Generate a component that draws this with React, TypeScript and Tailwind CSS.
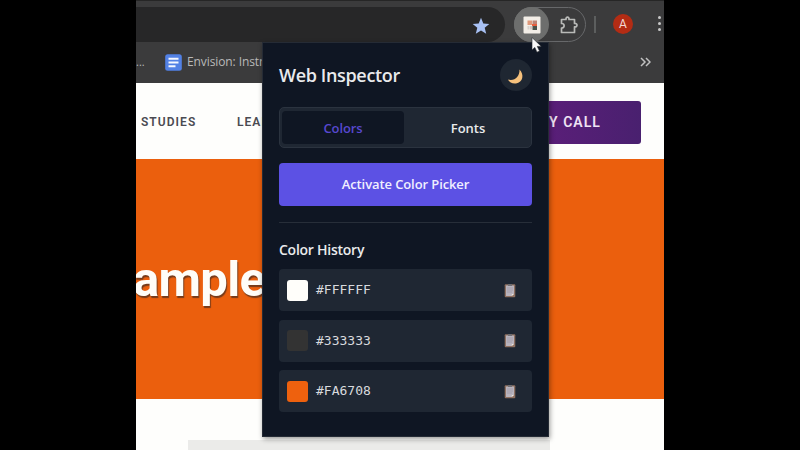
import React from "react";

function BrowserToolbar() {
  return (
    <div className="flex h-[42px] flex-none items-start bg-[#3b3b3c] border-t border-[#262626] pt-[6px]">
      <div className="flex h-[35px] w-[369px] items-center justify-end rounded-r-full bg-[#272728] pr-[15px]">
        <svg width="18" height="18" viewBox="0 0 18 18" className="mt-[2px]">
          <path d="M9 .8l2.300 5.600 6 .5-4.600 3.900 1.500 5.900L9 13.500l-5.200 3.200 1.500-5.900L.7 6.900l6-.5z" fill="#a8c1f4" />
        </svg>
      </div>
      <div className="ml-[9px] flex h-[35px] w-[72px] items-center rounded-full border border-[#67686a]">
        <div className="-ml-px flex size-[35px] flex-none items-center justify-center rounded-full bg-[#6d6e6d]">
          <svg width="18" height="18" viewBox="0 0 18 18">
            <rect x=".5" y=".5" width="17" height="17" rx="1" fill="#f3eee7" />
            <rect x="4.500" y="4.500" width="4.500" height="4.500" fill="#df997b" />
            <rect x="9.500" y="4.500" width="4.500" height="3.500" fill="#bd8475" />
            <rect x="9" y="8" width="5" height="2" fill="#e75f3d" />
            <rect x="9.500" y="10" width="4.500" height="4" fill="#49534b" />
            <rect x="4.500" y="10" width="2" height="3.500" fill="#d8d2cd" />
            <rect x="7" y="10" width="2" height="3.500" fill="#d4c7c2" />
          </svg>
        </div>
        <svg width="20" height="20" viewBox="0 0 20 20" className="ml-[10px]" fill="none" stroke="#b9bab8" strokeWidth="1.700" strokeLinejoin="round">
          <path d="M2.500 4.500H7C6.600 1.200 10.400 1.200 10 4.500H15.500V8.500C18.800 8.100 18.800 12.300 15.500 11.900V17.500H2.500V13C6 13 6 8.500 2.500 8.500Z" />
        </svg>
      </div>
      <div className="mt-[9px] ml-[8px] h-[17px] w-[2px] bg-[#5c5e5e]" />
      <div className="mt-[7px] ml-[17px] flex size-[20px] items-center justify-center rounded-full bg-[#b32c14] font-['Roboto',sans-serif] text-[12px] text-[#f3d9d4]">
        A
      </div>
      <div className="mt-[9px] ml-[25px] flex flex-col gap-[3px]">
        <i className="block size-[3px] rounded-full bg-[#c9c9c9]" />
        <i className="block size-[3px] rounded-full bg-[#c9c9c9]" />
        <i className="block size-[3px] rounded-full bg-[#c9c9c9]" />
      </div>
    </div>
  );
}

function BookmarksBar() {
  return (
    <div className="flex h-[41px] flex-none items-center bg-[#3b3b3c] font-['Open_Sans','Noto_Sans',sans-serif] text-[12px] whitespace-nowrap text-[#b9b9b9]">
      <span className="w-[29px] text-[11px]">...</span>
      <svg width="17" height="17" viewBox="0 0 17 17" className="-mt-px">
        <rect x=".2" y=".2" width="16.600" height="16.600" rx="2.500" fill="#5281e5" />
        <path d="M3.500 4.700h10M3.500 8.500h10M3.500 12.300h7" stroke="#f4f7ff" strokeWidth="2" />
      </svg>
      <span className="-mt-px ml-[5px] tracking-[-0.1px]">Envision: Instr</span>
      <svg width="11" height="10" viewBox="0 0 11 10" className="-mt-px mr-[13px] ml-auto" fill="none" stroke="#c1c1c1" strokeWidth="1.500">
        <path d="M1 1l4 4-4 4M6 1l4 4-4 4" />
      </svg>
    </div>
  );
}

function WebPage() {
  return (
    <div className="flex flex-1 flex-col bg-[#fefefc] font-['Roboto',sans-serif] whitespace-nowrap">
      <div className="flex h-[76px] flex-none items-center text-[12px] font-semibold tracking-[1.05px] text-[#4b4b52]">
        <span className="w-[101px] pt-[2px] pl-[5px]">STUDIES</span>
        <span className="pt-[2px]">LEADERSHIP</span>
        <div className="mt-[3px] ml-auto mr-[23px] flex h-[43px] w-[150px] items-center justify-end rounded-[3px] bg-linear-to-r from-[#641c7e] to-[#49206f] pr-[40px] text-[14px] font-semibold tracking-[1.05px] text-[#efe3f4]">
          MY CALL
        </div>
      </div>
      <div className="flex h-[240px] flex-none items-center overflow-hidden bg-[#eb5f0d]">
        <h1 className="-ml-[3px] text-[49px] leading-none font-bold tracking-[-0.7px] text-[#fffdf8] [text-shadow:1px_2px_1px_#753b1b]">ample</h1>
      </div>
      <div className="mt-[41px] ml-[52px] h-[10px] w-[362px] bg-[#ebebe9]" />
    </div>
  );
}

function ColorRow({ color, label }: { color: string; label: string }) {
  return (
    <div className="flex h-[42px] items-center rounded-[4px] bg-[#1f2733] pr-[16px] pl-[8px]">
      <span className="size-[21px] rounded-[3px]" style={{ backgroundColor: color }} />
      <span className="ml-[8px] font-['DejaVu_Sans_Mono',monospace] text-[13px] text-[#d8dade]">{label}</span>
      <svg width="12" height="15" viewBox="0 0 12 15" className="ml-auto">
        <rect x=".7" y="1.200" width="10.600" height="13" rx="1" fill="#8f7060" />
        <path d="M2 2.500h8v8.500L7.800 13H2z" fill="#b8b3bd" />
        <path d="M3 5h6M3 7h6M3 9h5" stroke="#9997a5" strokeWidth=".7" />
        <path d="M7.800 13v-2H10z" fill="#eee4da" />
        <rect x="4" y="1" width="4" height="2" rx=".5" fill="#706f74" />
      </svg>
    </div>
  );
}

function InspectorPopup() {
  return (
    <section className="absolute top-[42px] left-[262px] flex h-[395px] w-[287px] flex-col border border-[#252b35] bg-[#0f1623] px-[16px] font-['Open_Sans','Noto_Sans',sans-serif] font-semibold whitespace-nowrap text-[#e9eaec] shadow-[1px_2px_5px_rgba(0,0,0,0.4)]">
      <header className="mt-[16px] flex h-[33px] items-center justify-between">
        <h1 className="text-[18px] tracking-[-0.35px]">Web Inspector</h1>
        <div className="-mt-px flex size-[32px] items-center justify-center rounded-full bg-[#1f2732]">
          <svg width="18" height="18" viewBox="0 0 18 18" className="mt-[4px]">
            <path d="M12.500 1.500c5 5 3.500 13-3.500 14C5.500 16 2.500 14.500 1 11.500c6.500 1.700 11.800-2.500 11.500-10z" fill="#f6c17c" />
          </svg>
        </div>
      </header>
      <nav className="mt-[15px] flex h-[41px] flex-none rounded-[5px] border border-[#2b333f] bg-[#1f2733] p-[3px] text-[13px]">
        <div className="-ml-px flex w-[122px] items-center justify-center rounded-[4px] bg-[#0f1623] pt-[2px] tracking-[-0.1px] text-[#5748cf]">Colors</div>
        <div className="flex flex-1 items-center justify-center pt-[2px] pl-[4px]">Fonts</div>
      </nav>
      <button className="mt-[15px] h-[43px] flex-none rounded-[4px] bg-[#5c51e4] pt-px text-[13px] tracking-[-0.1px] text-[#f0efff]">Activate Color Picker</button>
      <hr className="mt-[16px] border-[#272e39]" />
      <h2 className="mt-[17px] h-[20px] text-[14px] leading-[20px] tracking-[-0.25px]">Color History</h2>
      <div className="mt-[9px] flex flex-col gap-[8.500px] font-normal">
        <ColorRow color="#fffefa" label="#FFFFFF" />
        <ColorRow color="#333333" label="#333333" />
        <ColorRow color="#ee610e" label="#FA6708" />
      </div>
    </section>
  );
}

export default function App() {
  return (
    <main className="relative flex h-[450px] w-[800px] justify-center overflow-hidden bg-black">
      <div className="flex w-[528px] flex-col overflow-hidden">
        <BrowserToolbar />
        <BookmarksBar />
        <WebPage />
      </div>
      <InspectorPopup />
      <svg className="absolute top-[37px] left-[531px]" width="12" height="17" viewBox="0 0 12 17">
        <path d="M1 .5v12.500l2.800-2.600 2.200 4.800 2.500-1.100-2.200-4.700h4z" fill="#f9f9f9" stroke="#24262c" strokeWidth=".6" />
      </svg>
    </main>
  );
}
